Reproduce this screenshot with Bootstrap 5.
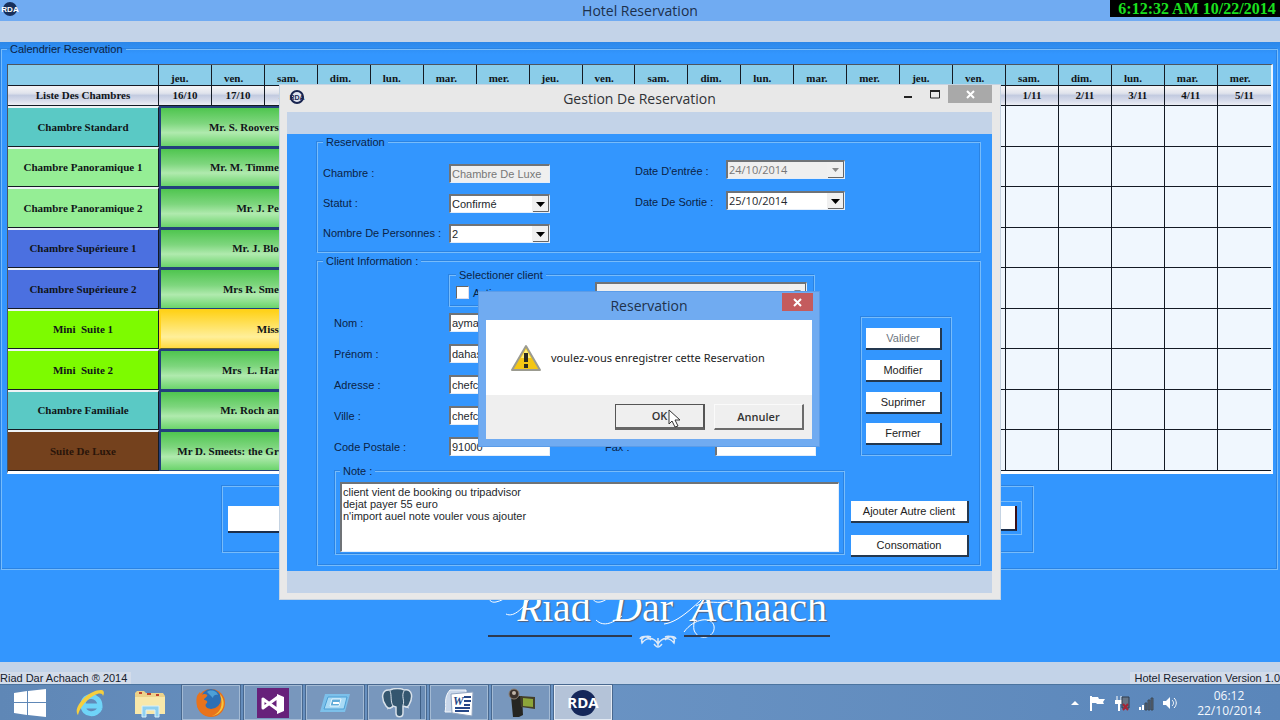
<!DOCTYPE html>
<html lang="fr">
<head>
<meta charset="utf-8">
<meta name="viewport" content="width=device-width, initial-scale=1">
<title>Hotel Reservation</title>
<link href="https://cdn.jsdelivr.net/npm/bootstrap@5.3.0/dist/css/bootstrap.min.css" rel="stylesheet">
<style>
:root{--blue:#3396fe;--strip:#c3d3e8;--edge:#78bcfa;--ui:"Liberation Sans",Arial,sans-serif;--seg:"Open Sans","Noto Sans",sans-serif}
body{background:var(--blue);font:11px/14px var(--ui);color:#0b2346;overflow-x:hidden}
.app-title{height:21px;background:#70abf2;font:14px/21px var(--seg);color:#1c304c}
.app-icon{top:1px;left:1px}
.clock-label{background:#000;color:#1be01f;font:bold 16px/17px "Liberation Serif",serif;width:170px;height:17px;padding-left:4px}
.strip{height:21px;background:var(--strip)}
.status{height:22px;background:var(--strip);color:#16202c;font-size:11px;line-height:12px}
.status span{background:#d3dcea;white-space:nowrap}
.desk-shade{background:linear-gradient(#2c87e8,var(--blue) 12px)}

/* etched group boxes */
.group{border:1px solid var(--edge);box-shadow:-1px -1px 0 #2b83e2,inset -1px -1px 0 #2b83e2;min-width:0}
.group legend{float:none;width:auto;margin:0 0 0 5px;padding:0 3px;font-size:11px;line-height:14px;background:var(--blue)}
.main-group{margin:0 2px 0 1px;padding:0 4px 16px 5px}
.main-group>legend{margin-left:0;background:none}

/* calendar */
.calendar{table-layout:fixed;width:100%;border-collapse:separate;border-spacing:0;font:bold 11px/13px "Liberation Serif",serif;color:#101418;border:1px solid #4d5560;border-right:2px solid #eef6ff;border-bottom:3px solid #fff}
.calendar col.rooms{width:151px}
.calendar th,.calendar td{padding:0;border-right:1px solid #141a24;border-bottom:1px solid #141a24;text-align:center;vertical-align:middle;overflow:hidden;white-space:nowrap}
.calendar tr>*:last-child{border-right:0}
.calendar .days th{height:21px;background:#8bcde9;text-align:left;vertical-align:bottom;padding-left:12px}
.calendar .dates th{height:20px;background:linear-gradient(#f2f2f5 10%,#e0e3ec 38%,#c3cbe0 50%,#d5daea 75%,#eceef4)}
.calendar tbody tr{height:40px}
.calendar tbody tr:nth-child(odd){height:41px}
.calendar tbody td{background:#f0f7fe}
.calendar tbody th{border-top:2px solid #eef3f6}
.calendar td.stay{background:linear-gradient(#4fc54f,#7ed67e 40%,#b0eaae 65%,#6bd46b);border:2px solid #22407c;border-bottom-width:1px;text-align:right;padding-right:37px}
.calendar td.stay.pending{background:linear-gradient(#ffd21a,#ffe97f 55%,#ffef9a 70%,#ffd93f);border-color:#ffd21a;border-bottom-color:#5a5a30}
.calendar .teal{background:#5ac9c5}.calendar .mint{background:#95ee95}.calendar .royal{background:#4b70e0}.calendar .lawn{background:#7dfb00}.calendar .wood{background:#74411d;color:#2a150a}
.actions{width:812px;height:67px;margin:12px auto 0 215px;padding:14px 11px 16px 5px}
.actions button{background:#fff;border:0;border-bottom:2px solid #1b2e4b;height:27px;margin-top:5px;width:400px}
.exit-box{padding:4px;height:34px;border:1px solid var(--edge)}
.exit-box button{border-right:2px solid #3a1018;margin:0;width:101px;height:25px}

/* logo */
.logo{width:342px;height:44px;margin:12px auto 0;position:relative;left:19px;color:#fff;font:40px/52px "Liberation Serif",serif;text-shadow:1px 1px 1px #555f74;white-space:nowrap}
.logo i{display:inline-block;text-align:right}
.logo .r{width:54px}.logo .d{width:51px}.logo .a{width:43px}
.logo svg{position:absolute;left:0;top:0;overflow:visible}

/* windows */
.win{position:absolute;top:85px;width:720px;background:#e8e8e8;padding:0 8px 6px 7px;box-shadow:0 0 0 1px #c5d3e2}
.win-title{height:27px;font:14px/27px var(--seg);color:#303236}
.win-title svg{display:block}
.win-ctl{top:0;right:0}
.win-ctl button,.dlg-x{border:0;padding:0;background:none}
.win-ctl .x{width:44px;height:18px;background:#a9a9a9;display:grid;place-items:center}
.win-body{background:var(--blue);padding:1px 11px 5px 30px}
.res-box{height:118px;padding:0 5px}
.client-box{height:312px;padding:0;margin-top:1px}
.fgrid{display:grid;align-items:center}
.fgrid.left{grid-template-columns:126px 101px;grid-auto-rows:30px;margin-top:9px}
.fgrid.right{grid-template-columns:91px 119px;grid-auto-rows:31px;margin:5px 0 0 85px}
.fgrid.right label{padding-top:3px}
.fgrid.ids{grid-template-columns:115px 101px 55px 110px 101px;grid-auto-rows:31px}
.field{appearance:none;width:100%;height:19px;background-color:#fff;border:1px solid #e4eefa;border-top:2px solid #6f7377;border-left:2px solid #6f7377;border-radius:0;padding:0 1px;font:11px/14px var(--ui);color:#24282c;outline:0;resize:none}
.field:disabled{background-color:#efefef;color:#777;opacity:1}
select.field{background-repeat:no-repeat;background-position:right 0 center;background-image:url("data:image/svg+xml,%3Csvg xmlns='http://www.w3.org/2000/svg' width='17' height='16'%3E%3Cpath fill='%23f0f0f0' d='M0 0h17v16H0z'/%3E%3Cpath d='M1 15.500h15.500V0' fill='none' stroke='%23666'/%3E%3Cpath d='M4 6h9l-4.500 5z' fill='%23000'/%3E%3C/svg%3E")}
select.field:disabled{background-image:url("data:image/svg+xml,%3Csvg xmlns='http://www.w3.org/2000/svg' width='17' height='16'%3E%3Cpath fill='%23f0f0f0' d='M0 0h17v16H0z'/%3E%3Cpath d='M1 15.500h15.500V0' fill='none' stroke='%23666'/%3E%3Cpath d='M5 6h7l-3.500 4z' fill='%23888'/%3E%3C/svg%3E")}
.date{font-family:var(--seg)}
.pick-box{width:366px;height:39px;margin-left:131px;padding:0 7px 0 6px}
.pick-box label{padding-top:2px}
.tick{appearance:none;width:13px;height:13px;margin:0;background:#fff;border:1px solid #dde;border-top-color:#666;border-left-color:#666}
.pick-box .field{width:212px}
.note-box{width:510px;margin:2px 0 0 17px;padding:0 5px 3px 4px;height:91px}
.note-box .field{height:70px;display:block;padding:2px 1px;line-height:12px;margin-top:4px}
.cmd{background:#fff;border:0;border-right:2px solid #24384f;border-bottom:2px solid #24384f;padding:0;height:22px;font:11px/20px var(--ui);color:#222}
.cmd-box{width:91px;height:139px;padding:10px 9px 0 4px;margin:49px 0 0 10px}
.cmd-wide{width:118px}
.side{margin-left:6px}
.cmd-more{padding-top:45px}
.win-foot{height:22px;background:var(--strip)}

/* message box */
.dlg{position:absolute;left:199px;top:207px;width:340px;background:#70abf1;padding:0 7px 7px;box-shadow:0 0 0 1px #5b9ce8}
.dlg-title{height:28px;font:14px/27px var(--seg);color:#20324c}
.dlg-x{top:1px;right:-1px;width:31px;height:18px;background:#c45b5d;display:grid;place-items:center}
.dlg-text{height:75px;background:#fff;font:11px/14px "Noto Sans",var(--seg);color:#222;padding-left:24px;gap:9px}
.dlg-foot{height:44px;background:#efefef;padding-right:8px;gap:9px}
.dlg-foot button{width:90px;height:26px;border:1px solid #fafafa;border-right:2px solid #6b6b6b;border-bottom:2px solid #6b6b6b;background:#efefef;font:600 11px/14px var(--seg);color:#333;padding:0}
.dlg-foot button.default{border:1px solid #555;border-right:2px solid #555;border-bottom:3px solid #666}
.pointer{left:188px;top:117px}

/* taskbar */
.taskbar{height:36px;background:linear-gradient(90deg,#5f87b6,#6b94c4 40%,#5a86ba);border-top:1px solid #4b749f}
.taskbar button{border:0;background:none;padding:0;height:35px;display:grid;place-items:center}
.taskbar .pin{width:60px}
.taskbar .task{width:58px;margin:0 2px;background:#7897bd;border:1px solid #a3bad4;outline:1px solid #48688f;outline-offset:0}
.taskbar .task.active{background:#b4c3d8;border-color:#e3eaf3}
.taskbar .stacked{box-shadow:inset -4px 0 0 #6b8db6,inset -5px 0 0 #3e5f86}
.clock{font:12px/15px var(--seg);color:#f4f8fd;width:86px}
</style>
</head>
<body>
<div class="min-vh-100 d-flex flex-column position-relative">
  <header class="app-title position-relative text-center">
    <svg class="app-icon position-absolute" width="18" height="16" viewBox="0 0 18 16"><circle cx="9" cy="8" r="7" fill="#18305c"/><text x="9" y="11" text-anchor="middle" font-family="Liberation Sans" font-weight="bold" font-size="8" fill="#fff">RDA</text></svg>
    Hotel Reservation
    <div class="clock-label position-absolute top-0 end-0">6:12:32 AM 10/22/2014</div>
  </header>
  <div class="strip"></div>
  <main class="flex-grow-1 desk-shade">
    <fieldset class="group main-group">
      <legend>Calendrier Reservation</legend>
      <div class="pt-2">
      <table class="calendar">
        <colgroup><col class="rooms"><col span="21"></colgroup>
        <thead>
          <tr class="days"><th></th><th>jeu.</th><th>ven.</th><th>sam.</th><th>dim.</th><th>lun.</th><th>mar.</th><th>mer.</th><th>jeu.</th><th>ven.</th><th>sam.</th><th>dim.</th><th>lun.</th><th>mar.</th><th>mer.</th><th>jeu.</th><th>ven.</th><th>sam.</th><th>dim.</th><th>lun.</th><th>mar.</th><th>mer.</th></tr>
          <tr class="dates"><th>Liste Des Chambres</th><th>16/10</th><th>17/10</th><th>18/10</th><th colspan="13"></th><th>1/11</th><th>2/11</th><th>3/11</th><th>4/11</th><th>5/11</th></tr>
        </thead>
        <tbody>
          <tr><th class="teal">Chambre Standard</th><td class="stay" colspan="3">Mr. S. Roovers</td><td colspan="13"></td><td></td><td></td><td></td><td></td><td></td></tr>
          <tr><th class="mint">Chambre Panoramique 1</th><td class="stay" colspan="3">Mr. M. Timme</td><td colspan="13"></td><td></td><td></td><td></td><td></td><td></td></tr>
          <tr><th class="mint">Chambre Panoramique 2</th><td class="stay" colspan="3">Mr. J. Pe</td><td colspan="13"></td><td></td><td></td><td></td><td></td><td></td></tr>
          <tr><th class="royal">Chambre Supérieure 1</th><td class="stay" colspan="3">Mr. J. Blo</td><td colspan="13"></td><td></td><td></td><td></td><td></td><td></td></tr>
          <tr><th class="royal">Chambre Supérieure 2</th><td class="stay" colspan="3">Mrs R. Sme</td><td colspan="13"></td><td></td><td></td><td></td><td></td><td></td></tr>
          <tr><th class="lawn">Mini&nbsp; Suite 1</th><td class="stay pending" colspan="3">Miss</td><td colspan="13"></td><td></td><td></td><td></td><td></td><td></td></tr>
          <tr><th class="lawn">Mini&nbsp; Suite 2</th><td class="stay" colspan="3">Mrs&nbsp; L. Har</td><td colspan="13"></td><td></td><td></td><td></td><td></td><td></td></tr>
          <tr><th class="teal">Chambre Familiale</th><td class="stay" colspan="3">Mr. Roch an</td><td colspan="13"></td><td></td><td></td><td></td><td></td><td></td></tr>
          <tr><th class="wood">Suite De Luxe</th><td class="stay" colspan="3">Mr D. Smeets: the Gr</td><td colspan="13"></td><td></td><td></td><td></td><td></td><td></td></tr>
        </tbody>
      </table>
      </div>
      <div class="group actions d-flex justify-content-between">
        <button type="button" aria-label="Action"></button>
        <div class="exit-box"><button type="button" aria-label="Quitter"></button></div>
      </div>
    </fieldset>
    <div class="logo">
      <svg width="342" height="66" viewBox="0 0 342 66" fill="none" stroke="#fff">
        <path d="M12 2C-2 8-2 22 8 20C18 18 26 8 38 8M18 32C26 36 36 26 46 10M112 8C98 16 108 26 120 16C128 10 134 8 142 8M108 38C116 46 126 40 134 34M176 42C192 40 208 22 224 8M196 50C206 36 224 34 226 44C228 56 210 60 206 48C204 36 214 16 224 8M208 24C222 16 230 24 242 18"/>
        <path stroke="#2d3a50" stroke-width="2" d="M0 54h144M196 54h146"/>
        <path stroke="#dce9f8" stroke-width="1.500" d="M170 64v-8M170 62c-5-8-12-6-16-1c-2-6 5-8 9-6M170 62c5-8 12-6 16-1c2-6-5-8-9-6M163 58c-4-5-10-4-11-1M177 58c4-5 10-4 11-1M166 62c2 2 2 3 4 3s2-1 4-3"/>
      </svg><i class="r">R</i>iad<i class="d">D</i>ar<i class="a">A</i>chaach
    </div>
  </main>

  <section class="win start-50 translate-middle-x" aria-label="Gestion De Reservation">
    <div class="win-title position-relative text-center">Gestion De Reservation
      <svg class="position-absolute top-0 start-0 mt-1" width="20" height="16" viewBox="0 0 20 16"><circle cx="10" cy="8" r="6" fill="#dfe3ee" stroke="#18244f" stroke-width="2"/><text x="10" y="11" text-anchor="middle" font-family="Liberation Sans" font-weight="bold" font-size="7" fill="#18244f">RDA</text></svg>
      <div class="win-ctl position-absolute d-flex">
        <button type="button" aria-label="Réduire"><svg width="26" height="18"><path d="M2 12h8" stroke="#222" stroke-width="2"/></svg></button>
        <button type="button" aria-label="Agrandir"><svg width="20" height="18"><path d="M2.500 6v7h9V6z" fill="none" stroke="#222"/><path d="M2 6h10" stroke="#222" stroke-width="2"/></svg></button>
        <button type="button" class="x" aria-label="Fermer"><svg width="9" height="9"><path d="M1 1l7 7M8 1L1 8" stroke="#fff" stroke-width="2"/></svg></button>
      </div>
    </div>
    <div class="win-foot"></div>
    <div class="win-body">
      <fieldset class="group res-box">
        <legend class="ms-0">Reservation</legend>
        <div class="d-flex align-items-start">
          <div class="fgrid left">
            <label for="chambre">Chambre :</label><input class="field" id="chambre" value="Chambre De Luxe" disabled>
            <label for="statut">Statut :</label><select class="field" id="statut"><option>Confirmé</option></select>
            <label for="nb">Nombre De Personnes :</label><select class="field" id="nb"><option>2</option></select>
          </div>
          <div class="fgrid right">
            <label for="din">Date D'entrée :</label><select class="field date" id="din" disabled><option>24/10/2014</option></select>
            <label for="dout">Date De Sortie :</label><select class="field date" id="dout"><option>25/10/2014</option></select>
          </div>
        </div>
      </fieldset>
      <fieldset class="group client-box">
        <legend>Client Information :</legend>
        <div class="d-flex">
          <div>
            <fieldset class="group pick-box">
              <legend class="ms-0">Selectioner client</legend>
              <div class="d-flex align-items-center justify-content-between">
                <label class="d-flex align-items-center gap-1"><input type="checkbox" class="tick"> Activer</label>
                <select class="field" aria-label="Client" disabled><option></option></select>
              </div>
            </fieldset>
            <div class="fgrid ids ms-3">
              <label for="nom">Nom :</label><input class="field" id="nom" value="ayman"><i></i><i></i><i></i>
              <label for="prenom">Prénom :</label><input class="field" id="prenom" value="dahas"><i></i><i></i><i></i>
              <label for="adresse">Adresse :</label><input class="field" id="adresse" value="chefc"><i></i><i></i><i></i>
              <label for="ville">Ville :</label><input class="field" id="ville" value="chefc"><i></i><i></i><i></i>
              <label for="cp">Code Postale :</label><input class="field" id="cp" value="91000"><i></i><label for="fax">Fax :</label><input class="field" id="fax">
            </div>
            <fieldset class="group note-box">
              <legend class="ms-0">Note :</legend>
              <textarea class="field" aria-label="Note">client vient de booking ou tripadvisor
dejat payer 55 euro
n'import auel note vouler vous ajouter</textarea>
            </fieldset>
          </div>
          <div class="side d-flex flex-column">
            <div class="group cmd-box d-grid">
              <button type="button" class="cmd text-secondary">Valider</button>
              <button type="button" class="cmd">Modifier</button>
              <button type="button" class="cmd">Suprimer</button>
              <button type="button" class="cmd">Fermer</button>
            </div>
            <div class="cmd-more d-grid gap-2">
              <button type="button" class="cmd cmd-wide">Ajouter Autre client</button>
              <button type="button" class="cmd cmd-wide mt-1">Consomation</button>
            </div>
          </div>
        </div>
      </fieldset>
    </div>
    <div class="win-foot"></div>

    <div class="dlg" role="dialog" aria-label="Reservation">
      <div class="dlg-title position-relative text-center">Reservation
        <button type="button" class="dlg-x position-absolute" aria-label="Fermer"><svg width="9" height="9"><path d="M1 1l7 7M8 1L1 8" stroke="#fff" stroke-width="2"/></svg></button>
      </div>
      <div class="dlg-text d-flex align-items-center">
        <svg width="32" height="28" viewBox="0 0 32 28"><path d="M16 2L30 26H2z" fill="#f3c615" stroke="#9b9b90" stroke-width="2" stroke-linejoin="round"/><path d="M16 5l5 9H11z" fill="#fdf07a"/><path d="M16 9v9M16 20v4" stroke="#2a2a20" stroke-width="4"/></svg>
        <span>voulez-vous enregistrer cette Reservation</span>
      </div>
      <div class="dlg-foot d-flex align-items-center justify-content-end">
        <button type="button" class="default">OK</button>
        <button type="button">Annuler</button>
      </div>
      <svg class="pointer position-absolute" width="16" height="20" viewBox="0 0 16 20"><path d="M2 1v14l3-3 3 6 3-1-3-6h5z" fill="#fff" stroke="#333"/></svg>
    </div>
  </section>

  <div class="status d-flex justify-content-between align-items-end overflow-hidden">
    <span class="pe-1">Riad Dar Achaach ® 2014</span><span class="ps-1">Hotel Reservation Version 1.0</span>
  </div>
  <footer class="taskbar d-flex align-items-center">
    <button type="button" class="pin" aria-label="Démarrer"><svg width="34" height="30" viewBox="0 0 34 30" fill="#fff"><path d="M1 5l13-2v11H1zM15 3l18-2v13H15zM1 15h13v12L1 25zM15 15h18v14l-18-2z"/></svg></button>
    <button type="button" class="pin" aria-label="Internet Explorer"><svg width="32" height="30" viewBox="0 0 32 30"><path d="M26 20c-3 8-17 8-17-3c0-12 17-11 17 1H10" fill="none" stroke="#6fd4f8" stroke-width="5"/><path d="M4 27C-2 20 14 2 27 2c4 0 3 4 2 6C28 0 8 12 4 27z" fill="#f6cf3e"/></svg></button>
    <button type="button" class="pin" aria-label="Explorateur"><svg width="34" height="30" viewBox="0 0 34 30"><path d="M2 5l2-2h7l2 2h17l2 3v18H2z" fill="#ecd28a"/><path d="M2 9h30v17H2z" fill="#f8e8aa"/><path d="M6 5h3M14 6h4M23 7h3" stroke="#c0422d" stroke-width="2"/><path d="M9 29V18h17v11h-4v-7h-9v7z" fill="#8fd0f0" stroke="#d8f0fb"/></svg></button>
    <button type="button" class="task" aria-label="Firefox"><svg width="32" height="30" viewBox="0 0 32 30"><circle cx="16" cy="15" r="14" fill="#e66f1c"/><circle cx="16" cy="11" r="10" fill="#2c6fb5"/><path d="M12 4c4-3 10-1 11 3c-3-1-5 1-5 3z" fill="#4da0d8"/><path d="M2 8c1-2 2-3 3-4c0 2 2 3 4 2c3 0 4 1 3 2c-1 2-3 2-3 4c2 0 4 1 3 3c-2 1-2 3 0 5c4 4 11 2 14-4c2 8-6 13-12 12C3 27 0 16 2 8z" fill="#e8731c"/><path d="M25 6c7 8 4 20-8 22c8-3 12-10 8-22z" fill="#f8c63c"/></svg></button>
    <button type="button" class="task" aria-label="Visual Studio"><svg width="32" height="30" viewBox="0 0 32 30"><path fill="#67217a" d="M0 0h32v30H0z"/><path d="M6 11v9l15-11v13L6 11z" fill="none" stroke="#fff" stroke-width="3" stroke-linejoin="round"/><path d="M20 6l7 3v14l-7 3z" fill="#fff"/></svg></button>
    <button type="button" class="task" aria-label="Application"><svg width="32" height="26" viewBox="0 0 32 26"><path d="M6 4h25l-5 18H1z" fill="#7cc0ea"/><path d="M9 7h19l-3 12H5z" fill="#a8daf5" stroke="#4c9fd4"/><path d="M13 9h9l-2 7h-9z" fill="#5fabd9" stroke="#e9f7ff"/><path d="M14 13h6" stroke="#fff" stroke-width="2"/></svg></button>
    <button type="button" class="task stacked" aria-label="PostgreSQL"><svg width="32" height="30" viewBox="0 0 32 30"><path d="M9 2C0 1 0 11 5 18c3 4 5 2 7 0l3 1v6c0 5 7 5 7 0v-7c2 0 4 3 6-1c4-7 4-17-5-15c-3-2-10-2-14 0z" fill="#34566f" stroke="#d8e1ea" stroke-width="1.500"/><path d="M9 3c2 4 0 10 3 15M23 3c-3 5 1 10-1 14M22 18l6 2M12 19l-6 2" fill="none" stroke="#d8e1ea"/></svg></button>
    <button type="button" class="task" aria-label="Word"><svg width="32" height="30" viewBox="0 0 32 30"><path d="M7 2h16v22H2C4 16 0 10 7 2z" fill="#c9d7ea" stroke="#f4f7fb"/><path d="M8 6l22-2-1 24-20-3z" fill="#fff" stroke="#8fa3c0"/><path d="M21 9h7M21 13h7M21 17h6M12 20h15M12 23h14" stroke="#264787" stroke-width="2"/><text x="10" y="17" font-family="Liberation Serif" font-weight="bold" font-style="italic" font-size="12" fill="#264787">W</text></svg></button>
    <button type="button" class="task" aria-label="Caméra"><svg width="32" height="30" viewBox="0 0 32 30"><path d="M6 8h11l1 19-4 2H8z" fill="#252522"/><circle cx="9" cy="6" r="5" fill="#3a302c" stroke="#8d8074"/><circle cx="9" cy="5" r="2" fill="#bfb3a8"/><path d="M15 8l15 1v12l-14-2z" fill="#433f2a"/><path d="M18 10l10 1v8l-10-1z" fill="#8ca53a"/></svg></button>
    <button type="button" class="task active" aria-label="RDA"><svg width="34" height="30" viewBox="0 0 34 30"><circle cx="17" cy="15" r="13" fill="#15275a"/><text x="17" y="20" text-anchor="middle" font-family="Open Sans" font-weight="bold" font-size="15" fill="#fff">RDA</text></svg></button>
    <div class="ms-auto d-flex align-items-center gap-2">
      <svg width="10" height="8"><path d="M1 6l4-4 4 4z" fill="#fff"/></svg>
      <svg width="18" height="18"><path d="M3 2v15" stroke="#fff" stroke-width="2"/><path d="M4 3h6l1 2h6l-2 3 1 2H9L8 9H4z" fill="#fff"/></svg>
      <svg width="16" height="18"><path d="M3 2v4M7 2v4" stroke="#fff"/><path d="M1 6h7v4H6v7H4v-7H1z" fill="#fff"/><path d="M8 3h7v11H8z" fill="#667587" stroke="#303d4c"/><path d="M9 10l5 6M14 10l-5 6" stroke="#a52536" stroke-width="2"/></svg>
      <svg width="16" height="16"><path d="M1 15v-3h2v3zM4 15v-5h2v5z" fill="#fff"/><path d="M7 15V8h2v7zM10 15V5h2v10zM13 15V3h2v12z" fill="#58626e" stroke="#3c4a5a"/></svg>
      <svg width="16" height="16"><path d="M1 6h3l4-4v12l-4-4H1z" fill="#fff"/><path d="M10 5c2 2 2 4 0 6M12 3c3 3 3 7 0 10" fill="none" stroke="#fff"/></svg>
      <div class="clock text-center me-2">06:12<br>22/10/2014</div>
    </div>
  </footer>
</div>
<script src="https://cdn.jsdelivr.net/npm/bootstrap@5.3.0/dist/js/bootstrap.bundle.min.js"></script>
</body>
</html>
